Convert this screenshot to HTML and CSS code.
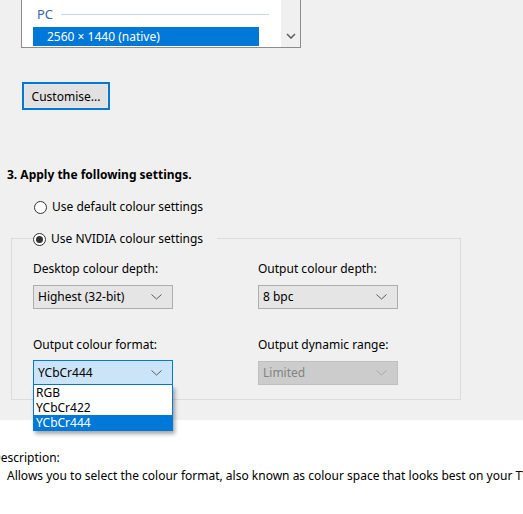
FILE: index.html
```html
<!DOCTYPE html>
<html>
<head>
<meta charset="utf-8">
<link rel="stylesheet" href="styles.css">
</head>
<body>
<div class="page">
  <div class="panel">
    <div class="listbox">
      <div class="lb-items">
        <div class="lb-group"><span>PC</span><i class="lb-rule"></i></div>
        <div class="lb-item sel">2560 × 1440 (native)</div>
      </div>
      <div class="lb-scroll">
        <svg width="10" height="6" viewBox="0 0 10 6"><path d="M1 1 L5 5 L9 1" fill="none" stroke="#606060" stroke-width="1.6"/></svg>
      </div>
    </div>

    <button class="btn">Customise...</button>

    <div class="step">3. Apply the following settings.</div>

    <div class="radio radio-default"><span class="rb"></span><span>Use default colour settings</span></div>

    <div class="group">
      <div class="legend">
        <div class="radio"><span class="rb on"></span><span>Use NVIDIA colour settings</span></div>
      </div>
      <div class="grid">
        <div class="field">
          <div class="lbl">Desktop colour depth:</div>
          <div class="combo"><span>Highest (32-bit)</span><svg class="chev" width="11" height="6" viewBox="0 0 11 6"><path d="M0.5 0.5 L5.5 5 L10.5 0.5" fill="none" stroke="#5a5a5a" stroke-width="1"/></svg></div>
        </div>
        <div class="field">
          <div class="lbl">Output colour depth:</div>
          <div class="combo"><span>8 bpc</span><svg class="chev" width="11" height="6" viewBox="0 0 11 6"><path d="M0.5 0.5 L5.5 5 L10.5 0.5" fill="none" stroke="#5a5a5a" stroke-width="1"/></svg></div>
        </div>
        <div class="field">
          <div class="lbl">Output colour format:</div>
          <div class="combo-wrap">
            <div class="combo open"><span>YCbCr444</span><svg class="chev" width="11" height="6" viewBox="0 0 11 6"><path d="M0.5 0.5 L5.5 5 L10.5 0.5" fill="none" stroke="#5a5a5a" stroke-width="1"/></svg></div>
            <div class="dropdown">
              <div class="dd-item">RGB</div>
              <div class="dd-item">YCbCr422</div>
              <div class="dd-item sel">YCbCr444</div>
            </div>
          </div>
        </div>
        <div class="field">
          <div class="lbl">Output dynamic range:</div>
          <div class="combo disabled"><span>Limited</span><svg class="chev" width="11" height="6" viewBox="0 0 11 6"><path d="M0.5 0.5 L5.5 5 L10.5 0.5" fill="none" stroke="#a8a8a8" stroke-width="1"/></svg></div>
        </div>
      </div>
    </div>
  </div>

  <div class="desc">
    <div class="desc-title">Description:</div>
    <div class="desc-text">Allows you to select the colour format, also known as colour space that looks best on your TV.</div>
  </div>
</div>
</body>
</html>
```

FILE: styles.css
```css
html, body {
  margin: 0;
  padding: 0;
  background: #ffffff;
  overflow: hidden;
}
body {
  font-family: "Noto Sans", "DejaVu Sans", sans-serif;
  font-size: 12px;
  color: #000;
  line-height: 16px;
}
.page {
  width: 523px;
  height: 514px;
  overflow: hidden;
}
.panel {
  background: #f0f0f0;
  height: 420px;
  display: flex;
  flex-direction: column;
  align-items: flex-start;
}

/* list box */
.listbox {
  margin-left: 21px;
  width: 278px;
  height: 47px;
  background: #fff;
  border: 1px solid #8c8c8c;
  border-top: none;
  display: flex;
}
.lb-items {
  flex: 1;
  padding-top: 5px;
  padding-left: 11px;
}
.lb-group {
  height: 18px;
  display: flex;
  align-items: center;
  padding-left: 4px;
  color: #3a67a8;
  font-size: 13px;
}
.lb-rule {
  display: block;
  margin-left: 8px;
  width: 208px;
  height: 1px;
  background: #c9d6e6;
}
.lb-item {
  margin-top: 4px;
  height: 19px;
  line-height: 19px;
  width: 226px;
  padding-left: 14px;
  box-sizing: border-box;
}
.lb-item.sel {
  background: #0078d7;
  color: #fff;
}
.lb-scroll {
  width: 19px;
  background: #f0f0f0;
  display: flex;
  align-items: flex-end;
  justify-content: center;
  padding-bottom: 8px;
  box-sizing: border-box;
}

/* button */
.btn {
  margin: 34px 0 0 22px;
  width: 88px;
  height: 28px;
  border: 2px solid #0078d7;
  background: #e1e1e1;
  box-shadow: inset 0 0 0 1px #e6e6e6;
  font-family: inherit;
  font-size: 12px;
  color: #000;
  padding: 0;
  text-align: center;
}

.step {
  margin: 57px 0 0 7px;
  font-weight: bold;
  font-size: 12px;
  height: 16px;
}

/* radios */
.radio {
  display: flex;
  align-items: center;
  height: 16px;
}
.radio-default {
  margin: 16px 0 0 34px;
}
.rb {
  width: 11px;
  height: 11px;
  border: 1px solid #333;
  border-radius: 50%;
  background: #fff;
  margin-right: 5px;
  display: flex;
  align-items: center;
  justify-content: center;
}
.rb.on::after {
  content: "";
  width: 7px;
  height: 7px;
  border-radius: 50%;
  background: #333;
}

/* group box */
.group {
  margin: 23px 0 0 11px;
  width: 448px;
  height: 160px;
  border: 1px solid #dcdcdc;
  box-sizing: content-box;
}
.legend {
  margin: -8px 0 0 21px;
  background: #f0f0f0;
  display: flex;
  width: max-content;
  padding-right: 14px;
}
.grid {
  display: grid;
  grid-template-columns: 225px 140px;
  row-gap: 28px;
  padding: 14px 0 0 21px;
}
.field {
  display: flex;
  flex-direction: column;
}
.lbl {
  height: 16px;
  margin-bottom: 8px;
}
.combo {
  width: 140px;
  height: 24px;
  box-sizing: border-box;
  border: 1px solid #adadad;
  background: #e5e5e5;
  display: flex;
  align-items: center;
  justify-content: space-between;
  padding: 0 10px 0 4px;
}
.combo.open {
  background: #cce4f7;
  border-color: #0078d7;
  height: 25px;
}
.combo.disabled {
  background: #cccccc;
  border-color: #bfbfbf;
  color: #838383;
}
.combo-wrap {
  position: relative;
  margin-top: -1px;
}
.dropdown {
  position: absolute;
  top: 25px;
  left: 0;
  width: 140px;
  box-sizing: border-box;
  border: 1px solid #0078d7;
  border-top: none;
  background: #fff;
  box-shadow: 2px 3px 4px rgba(0,0,0,0.35);
}
.dd-item {
  height: 15px;
  line-height: 15px;
  padding-left: 2px;
}
.dd-item.sel {
  background: #0078d7;
  color: #fff;
}

/* description */
.desc {
  padding-top: 30px;
  white-space: nowrap;
}
.desc-title {
  margin-left: -8px;
  height: 16px;
}
.desc-text {
  margin-left: 7px;
  margin-top: 2px;
}
```
